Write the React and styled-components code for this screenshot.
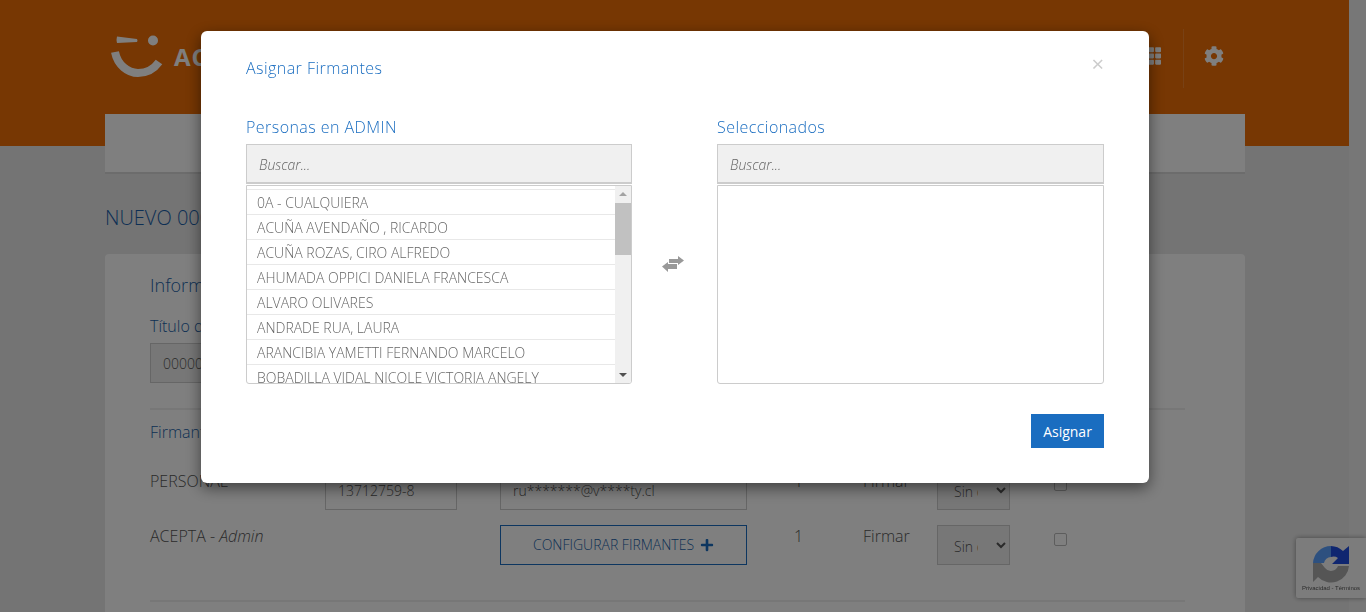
import React from "react";
import styled, { createGlobalStyle } from "styled-components";
import { FaTh, FaCog, FaPlus } from "react-icons/fa";

const GlobalStyle = createGlobalStyle`
  html, body {
    margin: 0;
    height: 612px;
    overflow: hidden;
    background: #eee;
    font-family: "Open Sans", sans-serif;
    font-weight: 300;
  }
  * { box-sizing: border-box; }
`;

const Screen = styled.div`
  display: flex;
  height: 612px;
  overflow: hidden;
`;

const Page = styled.div`
  width: 1349px;
  flex: none;
  background: #e8e8e8;
`;

const Gutter = styled.div`
  flex: 1;
  background: #eee;
`;

const Header = styled.header`
  height: 146px;
  background: #ee6e06;
  display: flex;
  align-items: flex-start;
  justify-content: space-between;
  padding: 29px 125px 0 111px;
  color: #fff;
`;

const Brand = styled.div`
  display: flex;
  align-items: center;
  gap: 11px;
  padding-top: 6px;
  font-weight: 700;
  font-size: 24px;
  letter-spacing: 1px;
`;

const Tools = styled.div`
  display: flex;
  align-items: flex-start;
  height: 59px;
  & > svg { margin-top: 17px; }
`;

const Divider = styled.span`
  width: 1px;
  height: 59px;
  margin: 0 20px 0 22px;
  background: rgba(255, 255, 255, 0.15);
`;

const Content = styled.main`
  margin: -32px 0 0 105px;
  width: 1140px;
`;

const NavBar = styled.div`
  height: 60px;
  background: #fff;
  border-bottom: 2px solid #d8d8d8;
`;

const PageTitle = styled.h1`
  margin: 30px 0 23px;
  font-size: 20px;
  line-height: 27px;
  font-weight: 300;
  color: #1a5fa8;
`;

const Card = styled.section`
  background: #fff;
  border-radius: 4px;
  padding: 19px 60px 0 45px;
  height: 400px;
`;

const CardTitle = styled.h2`
  margin: 0;
  font-size: 18px;
  line-height: 24px;
  font-weight: 300;
  color: #1a5fa8;
`;

const FieldLabel = styled.label`
  display: block;
  margin: 18px 0 6px;
  font-size: 16px;
  line-height: 22px;
  color: #1a5fa8;
`;

const Input = styled.div`
  width: ${props => props.$w || "100%"};
  height: 40px;
  padding: 0 12px;
  line-height: 40px;
  font-size: 14px;
  color: #555;
  background: ${props => (props.$filled ? "#eee" : "#fff")};
  border: 1px solid #ccc;
  white-space: nowrap;
  overflow: hidden;
`;

const Rule = styled.hr`
  margin: ${props => props.$m};
  border: 0;
  border-top: 2px solid #eee;
`;

const Section = styled.h3`
  margin: 0 0 27px;
  font-size: 16px;
  line-height: 22px;
  font-weight: 300;
  color: #1a5fa8;
`;

const SignerRow = styled.div`
  display: grid;
  grid-template-columns: 175px 175px 263px 100px 74px 117px 30px;
  height: 40px;
  margin-bottom: 15px;
  font-size: 16px;
  line-height: 22px;
  color: #555;
`;

const Count = styled.span`
  padding-left: 31px;
`;

const OrderSelect = styled.select`
  width: 73px;
  height: 40px;
  padding: 2px 15px 0 12px;
  font: 300 14px "Open Sans", sans-serif;
  color: #555;
  background: #eee;
  border: 1px solid #ccc;
`;

const Check = styled.span`
  width: 13px;
  height: 13px;
  margin-top: 8px;
  background: #fff;
  border: 1px solid #bbb;
  border-radius: 2px;
`;

const OutlineButton = styled.div`
  width: 247px;
  height: 40px;
  display: flex;
  align-items: center;
  justify-content: center;
  gap: 6px;
  font-size: 14px;
  color: #1a5fa8;
  border: 1px solid #1a6dc0;
`;

const Badge = styled.div`
  position: fixed;
  right: 0;
  top: 538px;
  width: 70px;
  height: 60px;
  display: flex;
  flex-direction: column;
  align-items: center;
  gap: 1px;
  padding-top: 7px;
  background: #f9f9f9;
  border-radius: 2px 0 0 2px;
  box-shadow: 0 0 5px rgba(0, 0, 0, 0.4);
  font: 400 6px/8px "Liberation Sans", sans-serif;
  color: #555;
  white-space: nowrap;
`;

const Backdrop = styled.div`
  position: fixed;
  inset: 0;
  background: rgba(0, 0, 0, 0.5);
`;

const Modal = styled.div`
  position: absolute;
  top: 31px;
  left: 201px;
  width: 948px;
  height: 452px;
  padding: 26px 45px 0;
  background: #fff;
  border-radius: 6px;
  box-shadow: 0 5px 15px rgba(0, 0, 0, 0.5);
`;

const ModalTitle = styled.h4`
  margin: 0 0 37px;
  font-size: 16px;
  line-height: 22px;
  font-weight: 300;
  letter-spacing: 0.45px;
  color: #1a6dc0;
`;

const Close = styled.span`
  position: absolute;
  top: 20px;
  right: 45px;
  font: 400 22px/24px "Open Sans", sans-serif;
  color: #ccc;
`;

const Columns = styled.div`
  display: grid;
  grid-template-columns: 386px 85px 387px;
`;

const ColumnLabel = styled.div`
  font-size: 16px;
  line-height: 22px;
  margin-bottom: 6px;
  font-weight: 300;
  letter-spacing: 0.45px;
  color: #1a6dc0;
`;

const Search = styled.input`
  display: block;
  width: 100%;
  height: 40px;
  padding: 2px 12px 0;
  font: italic 300 14px "Open Sans", sans-serif;
  color: #555;
  background: #f0f0f0;
  border: 1px solid #ccc;
  border-bottom-width: 2px;
  outline: 0;
  &::placeholder { color: #666; opacity: 1; }
`;

const ListBox = styled.div`
  display: flex;
  height: 199px;
  margin-top: 1px;
  border: 1px solid #ccc;
  border-radius: 0 0 3px 3px;
  overflow: hidden;
`;

const Rows = styled.ul`
  flex: 1;
  margin: 0;
  padding: 3px 0 0;
  list-style: none;
  overflow: hidden;
`;

const Row = styled.li`
  height: 25px;
  padding-left: 10px;
  border-top: 1px solid #e8e8e8;
  font-size: 14px;
  line-height: 25px;
  color: #666;
  white-space: nowrap;
`;

const ScrollTrack = styled.div`
  width: 16px;
  position: relative;
  background: #f0f0f0;
`;

const ScrollThumb = styled.div`
  position: absolute;
  top: 17px;
  left: 0;
  width: 100%;
  height: 52px;
  background: #c1c1c1;
`;

const ScrollArrow = styled.span`
  position: absolute;
  left: 4px;
  ${props => (props.$down ? "bottom: 6px;" : "top: 6px;")}
  border-left: 4px solid transparent;
  border-right: 4px solid transparent;
  ${props => (props.$down ? "border-top: 4px solid #505050;" : "border-bottom: 4px solid #a3a3a3;")}
`;

const Swap = styled.div`
  display: flex;
  justify-content: center;
  padding: 112px 3px 0 0;
  color: #999;
  & > svg { margin-top: 28px; }
`;

const Footer = styled.div`
  display: flex;
  justify-content: flex-end;
  margin-top: 30px;
`;

const Primary = styled.button`
  width: 73px;
  height: 34px;
  padding: 0;
  border: 0;
  font: 400 14px "Open Sans", sans-serif;
  color: #fff;
  background: #1a6dc0;
`;

const people = [
  "0A - CUALQUIERA",
  "ACUÑA AVENDAÑO , RICARDO",
  "ACUÑA ROZAS, CIRO ALFREDO",
  "AHUMADA OPPICI DANIELA FRANCESCA",
  "ALVARO OLIVARES",
  "ANDRADE RUA, LAURA",
  "ARANCIBIA YAMETTI FERNANDO MARCELO",
  "BOBADILLA VIDAL NICOLE VICTORIA ANGELY",
];

const Logo = () => (
  <svg width="52" height="43" viewBox="0 0 52 43">
    <path d="M6 1.5 L26 4 Q27 6 26 7 L6 8 Q5 5 6 1.5Z" fill="currentColor" />
    <circle cx="42" cy="5.5" r="5" fill="currentColor" />
    <path d="M4 17 C6.5 30 17 38 27 38 C36 38 43 34 48 27" fill="none" stroke="currentColor" strokeWidth="8" />
  </svg>
);

const RecaptchaMark = () => (
  <svg width="38" height="38" viewBox="0 0 38 38">
    <path d="M19 1 A18 18 0 0 0 1 18 H12 A7 7 0 0 1 19 12 Z" fill="#5ba0ff" />
    <path d="M19 1 A18 18 0 0 1 31 6 L37 1 V19 H20 L26 13 A8 8 0 0 0 19 12 Z" fill="#1f4ce0" />
    <path d="M1 18 H9 L13 23 A7.5 7.5 0 0 0 26 21 H37 A18 18 0 0 1 6 32 L1 37 Z" fill="#ababab" />
  </svg>
);

// two thick offset arrows, the icon package one is too thin
const SwapIcon = () => (
  <svg width="22" height="16" viewBox="0 0 22 16" fill="currentColor">
    <path d="M7 3 H16 V0 L22 4.5 L16 9 V7 H7 Z" />
    <path d="M15 8 H6 V6 L0 10.5 L6 16 V13 H15 Z" />
  </svg>
);

const PickerColumn = ({ label, children }) => (
  <div>
    <ColumnLabel>{label}</ColumnLabel>
    <Search placeholder="Buscar..." />
    <ListBox>{children}</ListBox>
  </div>
);

export default function App() {
  return (
    <>
      <GlobalStyle />
      <Screen>
        <Page>
          <Header>
            <Brand>
              <Logo />
              ACEPTA
            </Brand>
            <Tools>
              <FaTh size={20} />
              <Divider />
              <FaCog size={20} />
            </Tools>
          </Header>
          <Content>
            <NavBar />
            <PageTitle>NUEVO 00000</PageTitle>
            <Card>
              <CardTitle>Información</CardTitle>
              <FieldLabel>Título del documento</FieldLabel>
              <Input $w="400px" $filled>00000</Input>
              <Rule $m="25px 0 11px" />
              <Section>Firmantes</Section>
              <SignerRow>
                <span>PERSONAL</span>
                <Input $w="132px">13712759-8</Input>
                <Input $w="247px">ru*******@v****ty.cl</Input>
                <Count>1</Count>
                <span>Firmar</span>
                <OrderSelect defaultValue="a"><option value="a">Sin orden</option></OrderSelect>
                <Check />
              </SignerRow>
              <SignerRow>
                <span>ACEPTA - <em>Admin</em></span>
                <span />
                <OutlineButton>CONFIGURAR FIRMANTES <FaPlus size={14} color="#1a6dc0" /></OutlineButton>
                <Count>1</Count>
                <span>Firmar</span>
                <OrderSelect defaultValue="a"><option value="a">Sin orden</option></OrderSelect>
                <Check />
              </SignerRow>
              <Rule $m="35px 0 0" />
            </Card>
          </Content>
        </Page>
        <Gutter />
      </Screen>
      <Badge>
        <RecaptchaMark />
        <span>Privacidad - Términos</span>
      </Badge>
      <Backdrop>
        <Modal>
          <ModalTitle>Asignar Firmantes</ModalTitle>
          <Close>×</Close>
          <Columns>
            <PickerColumn label="Personas en ADMIN">
              <Rows>
                {people.map(name => <Row key={name}>{name}</Row>)}
              </Rows>
              <ScrollTrack>
                <ScrollArrow />
                <ScrollThumb />
                <ScrollArrow $down />
              </ScrollTrack>
            </PickerColumn>
            <Swap><SwapIcon /></Swap>
            <PickerColumn label="Seleccionados" />
          </Columns>
          <Footer><Primary>Asignar</Primary></Footer>
        </Modal>
      </Backdrop>
    </>
  );
}
